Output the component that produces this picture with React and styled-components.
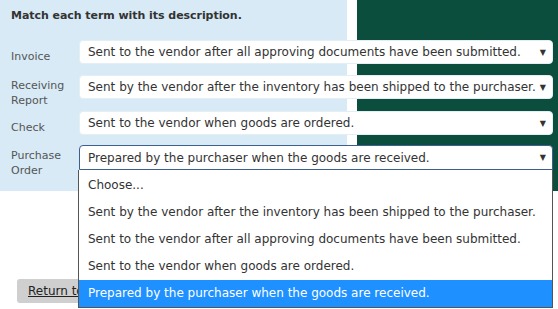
import styled, { createGlobalStyle } from "styled-components";

const GlobalStyle = createGlobalStyle`
  html, body {
    margin: 0;
    padding: 0;
    background: #ffffff;
    font-family: "DejaVu Sans", Verdana, sans-serif;
  }
`;

const Page = styled.div`
  width: 558px;
  height: 309px;
  overflow: hidden;
  position: relative;
`;

const Top = styled.div`
  height: 191px;
  background: linear-gradient(
    to right,
    #d7eaf6 0,
    #d7eaf6 347px,
    #ffffff 347px,
    #ffffff 357px,
    #0b4e3e 357px
  );
  padding: 9px 0 0 11px;
  box-sizing: border-box;
`;

const Title = styled.div`
  font-size: 11px;
  font-weight: bold;
  letter-spacing: -0.05px;
  color: #333333;
  line-height: 14px;
  margin-bottom: 17px;
`;

const Rows = styled.div`
  display: flex;
  flex-direction: column;
`;

const Row = styled.div`
  display: grid;
  grid-template-columns: 68px 474px;
  align-items: start;
  position: relative;
  height: ${(p) => (p.$open ? 25 : 24)}px;
  margin-bottom: ${(p) => p.$gap}px;
`;

const Label = styled.div`
  font-size: 11px;
  line-height: 15px;
  color: #555555;
  padding-top: ${(p) => p.$offset}px;
`;

const Select = styled.div`
  height: ${(p) => (p.$open ? 25 : 24)}px;
  box-sizing: border-box;
  background: #ffffff;
  border: 1px solid ${(p) => (p.$open ? "#3d5f8f" : "#e4eef5")};
  border-radius: ${(p) => (p.$open ? "4px 4px 0 0" : "4px")};
  display: flex;
  align-items: center;
  justify-content: space-between;
  padding: 0 6px 0 8px;
  font-size: 12px;
  color: #333333;
  white-space: nowrap;
`;

const Arrow = styled.span`
  font-size: 8px;
  color: #333333;
`;

const Menu = styled.div`
  position: absolute;
  left: 67px;
  top: 25px;
  width: 475px;
  box-sizing: border-box;
  background: #ffffff;
  border: 1px solid #555555;
  border-top: none;
  padding-top: 2px;
  z-index: 2;
`;

const Option = styled.div`
  height: 27px;
  line-height: 27px;
  padding-left: 9px;
  font-size: 12px;
  white-space: nowrap;
  color: ${(p) => (p.$active ? "#ffffff" : "#333333")};
  background: ${(p) => (p.$active ? "#1e90ff" : "transparent")};
`;

const Bottom = styled.div`
  padding: 88px 0 0 17px;
`;

const Button = styled.button`
  height: 24px;
  padding: 0 11px;
  border: none;
  border-radius: 3px;
  background: #cfcfcf;
  font-family: "DejaVu Sans", Verdana, sans-serif;
  font-size: 12px;
  color: #222222;
  text-decoration: underline;
`;

const options = [
  "Choose...",
  "Sent by the vendor after the inventory has been shipped to the purchaser.",
  "Sent to the vendor after all approving documents have been submitted.",
  "Sent to the vendor when goods are ordered.",
  "Prepared by the purchaser when the goods are received.",
];

const rows = [
  { label: ["Invoice"], offset: 9, gap: 11, value: options[2] },
  { label: ["Receiving", "Report"], offset: 3, gap: 12, value: options[1] },
  { label: ["Check"], offset: 9, gap: 10, value: options[3] },
  { label: ["Purchase", "Order"], offset: 3, gap: 0, value: options[4], open: true },
];

export default function App() {
  return (
    <Page>
      <GlobalStyle />
      <Top>
        <Title>Match each term with its description.</Title>
        <Rows>
          {rows.map((r) => (
            <Row key={r.label.join(" ")} $open={r.open} $gap={r.gap}>
              <Label $offset={r.offset}>
                {r.label.map((l) => (
                  <div key={l}>{l}</div>
                ))}
              </Label>
              <Select $open={r.open}>
                <span>{r.value}</span>
                <Arrow>▼</Arrow>
              </Select>
              {r.open && (
                <Menu>
                  {options.map((o, i) => (
                    <Option key={o} $active={i === 4}>
                      {o}
                    </Option>
                  ))}
                </Menu>
              )}
            </Row>
          ))}
        </Rows>
      </Top>
      <Bottom>
        <Button>Return to Assignment</Button>
      </Bottom>
    </Page>
  );
}
